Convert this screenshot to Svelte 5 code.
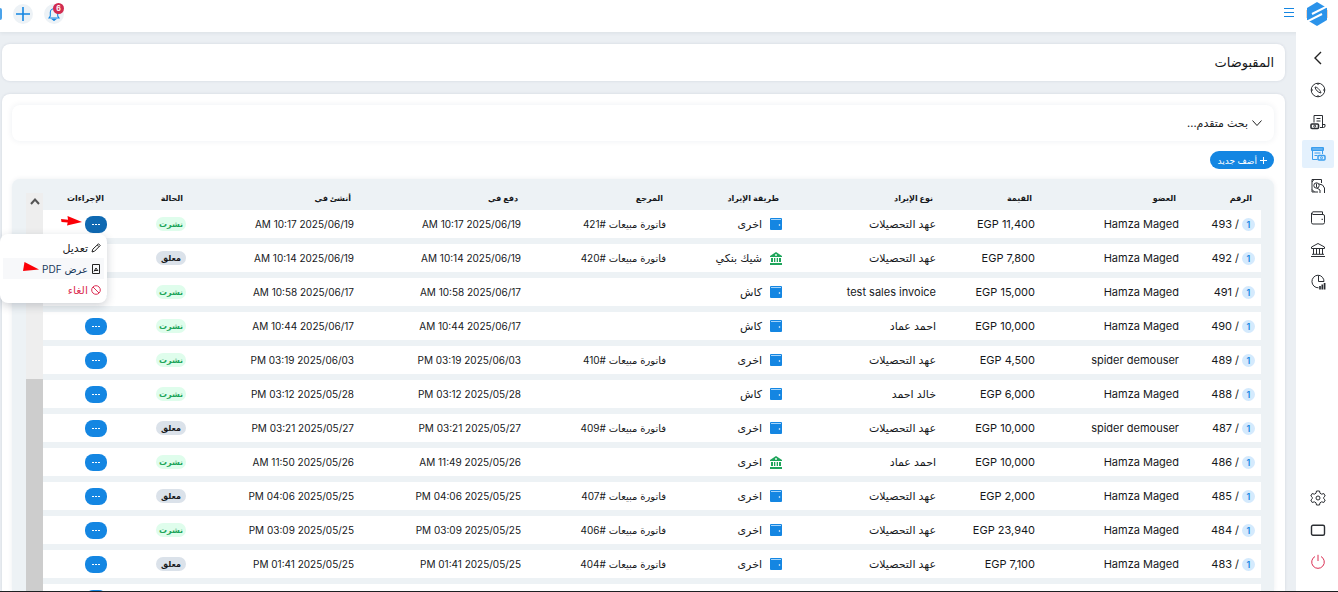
<script lang="ts">
  type Method = 'wallet' | 'bank';

  interface Receipt {
    id: string;
    member: string;
    amount: string;
    type: string;
    icon: Method;
    method: string;
    ref: string;
    paid: string;
    created: string;
    published: boolean;
  }

  const columns = [
    { label: 'الرقم', width: 76 },
    { label: 'العضو', width: 144 },
    { label: 'القيمة', width: 99 },
    { label: 'نوع الإيراد', width: 154 },
    { label: 'طريقة الإيراد', width: 116 },
    { label: 'المرجع', width: 145 },
    { label: 'دفع في', width: 167 },
    { label: 'أنشئ في', width: 168 },
    { label: 'الحالة', width: 79 },
    { label: 'الإجراءات', width: 70 },
  ];
  const total = columns.reduce((sum, c) => sum + c.width, 0);

  const deposits = 'عهد التحصيلات';
  const invoice = 'فاتورة مبيعات';

  function row(
    id: string, member: string, amount: string, type: string, icon: Method, method: string,
    ref: string, paid: string, created: string, published: boolean
  ): Receipt {
    return { id, member, amount, type, icon, method, ref, paid, created, published };
  }

  const receipts: Receipt[] = [
    row('493', 'Hamza Maged', '11,400', deposits, 'wallet', 'اخرى', '421', '2025/06/19 10:17 AM', '2025/06/19 10:17 AM', true),
    row('492', 'Hamza Maged', '7,800', deposits, 'bank', 'شيك بنكي', '420', '2025/06/19 10:14 AM', '2025/06/19 10:14 AM', false),
    row('491', 'Hamza Maged', '15,000', 'test sales invoice', 'wallet', 'كاش', '', '2025/06/17 10:58 AM', '2025/06/17 10:58 AM', true),
    row('490', 'Hamza Maged', '10,000', 'احمد عماد', 'wallet', 'كاش', '', '2025/06/17 10:44 AM', '2025/06/17 10:44 AM', true),
    row('489', 'spider demouser', '4,500', deposits, 'wallet', 'اخرى', '410', '2025/06/03 03:19 PM', '2025/06/03 03:19 PM', true),
    row('488', 'Hamza Maged', '6,000', 'خالد احمد', 'wallet', 'كاش', '', '2025/05/28 03:12 PM', '2025/05/28 03:12 PM', true),
    row('487', 'spider demouser', '10,000', deposits, 'wallet', 'اخرى', '409', '2025/05/27 03:21 PM', '2025/05/27 03:21 PM', false),
    row('486', 'Hamza Maged', '10,000', 'احمد عماد', 'bank', 'اخرى', '', '2025/05/26 11:49 AM', '2025/05/26 11:50 AM', true),
    row('485', 'Hamza Maged', '2,000', deposits, 'wallet', 'اخرى', '407', '2025/05/25 04:06 PM', '2025/05/25 04:06 PM', false),
    row('484', 'Hamza Maged', '23,940', deposits, 'wallet', 'اخرى', '406', '2025/05/25 03:09 PM', '2025/05/25 03:09 PM', true),
    row('483', 'Hamza Maged', '7,100', deposits, 'wallet', 'اخرى', '404', '2025/05/25 01:41 PM', '2025/05/25 01:41 PM', false),
  ];

  let openId = $state('493');

  function toggle(id: string) {
    openId = openId === id ? '' : id;
  }
</script>

<div class="shell" dir="rtl">
  <header class="topbar">
    <a class="logo" href="#home" aria-label="الرئيسية">
      <svg width="22" height="24" viewBox="0 0 22 24">
        <path d="M0 8h22v8H0z" fill="#f7d8c2" />
        <path d="M11 0 21 6v12l-10 6-10-6V6z" fill="#2b93ea" />
        <path d="M22 4 6 12M0 20l16-8" fill="none" stroke="#fff" stroke-width="2" />
      </svg>
    </a>
    <button class="burger" aria-label="القائمة">
      <svg width="12" height="10" viewBox="0 0 12 10" fill="#1486e2">
        <path d="M1 0h10v1H1zM1 4h10v1H1zM1 8h10v1H1z" />
      </svg>
    </button>
    <div class="tools">
      <button class="round bell" aria-label="الإشعارات">
        <svg width="12" height="14" viewBox="0 0 12 14" fill="none" stroke="#1486e2" stroke-width="1.1">
          <path d="M1 11h10L9.700 9V5.500a3.700 3.700 0 0 0-7.400 0V9zM6 .5v1.200" />
          <path d="M4.500 12.200h3L6 13.400z" fill="#1486e2" />
        </svg>
        <span class="count">6</span>
      </button>
      <button class="round" aria-label="إضافة">
        <svg width="14" height="14" viewBox="0 0 14 14" stroke="#1486e2" stroke-width="1.6"><path d="M7 0v14M0 7h14" /></svg>
      </button>
      <button class="avatar" aria-label="الحساب"></button>
    </div>
  </header>

  <div class="body">
    <nav class="side">
      <button class="collapse" aria-label="طي القائمة">
        <svg width="10" height="14" viewBox="0 0 10 14" fill="none" stroke="#222" stroke-width="1.4"><path d="M8 1 2 7l6 6" /></svg>
      </button>
      <a href="#compass" aria-label="لوحة التحكم">
        <svg viewBox="0 0 16 16"><circle cx="8" cy="8" r="6.800" /><path d="M5 5c2 0 5 2.500 6 6-3-.5-5.500-3-6-6zM8 1v2M8 13v2M1 8h2M13 8h2" /></svg>
      </a>
      <a href="#sales" aria-label="المبيعات">
        <svg viewBox="0 0 16 16"><path d="M4 8.500V1.500h8.500V13M6.500 4.500h4M6.500 7h4M10 13.500h3.500a1.500 1.500 0 0 0 1.500-1.500v-1.500h-2.500" /><rect x="1" y="10" width="7.500" height="4.500" rx="1" stroke-width="1.600" /><circle cx="4.700" cy="12.200" r="1" /></svg>
      </a>
      <a class="active" href="#receipts" aria-label="المقبوضات">
        <svg viewBox="0 0 16 16"><path d="M1.500 1.500h12v3h-12zM2.500 4.500v9h5M12.500 4.500V8M4.500 7h6M4.500 9.500h3" /><path d="M2 2h11v2H2z" fill="#8ac6f6" /><rect x="8" y="9.500" width="7" height="4.500" rx="1" stroke-width="1.500" /><circle cx="11.500" cy="11.800" r="1" /></svg>
      </a>
      <a href="#payments" aria-label="المدفوعات">
        <svg viewBox="0 0 16 16"><path d="M8 14H2V1.500h9.500V5M2 4l2-2.500M2 11.500 4.500 14" /><circle cx="6.500" cy="7.500" r="2.700" /><path d="M6.500 5.500v4M9 6l3.500 1 2 3v5M7 10l3 2v3" /></svg>
      </a>
      <a href="#wallet" aria-label="المحفظة">
        <svg viewBox="0 0 16 16"><path d="M1.500 3v9.500A1.500 1.500 0 0 0 3 14h10a1.500 1.500 0 0 0 1.500-1.500V6A1.500 1.500 0 0 0 13 4.500H3A1.400 1.400 0 0 1 3 1.800h9.500v2.700M11.500 9.300h1.500" /></svg>
      </a>
      <a href="#bank" aria-label="البنوك">
        <svg viewBox="0 0 16 16"><path d="M1.500 6.500V5L8 1.500 14.500 5v1.500zM3.500 7v5M6.500 7v5M9.500 7v5M12.500 7v5M2 12.300h12M1 14.500h14" /></svg>
      </a>
      <a href="#reports" aria-label="التقارير">
        <svg viewBox="0 0 16 16"><path d="M8 1.200a6.300 6.300 0 1 0 .5 12.600M8.500 1.200A6.300 6.300 0 0 1 14 7.500H8.500z" /><path d="M10 12v3.500M12.300 10.500v5M14.600 9v6.500" stroke-width="1.700" /></svg>
      </a>
      <span class="spacer"></span>
      <a href="#settings" aria-label="الإعدادات">
        <svg viewBox="0 0 16 16"><path d="m6.500 1-.5 2.200-1.700 1L2.200 3.500.8 6l1.600 1.500v1L.8 10l1.400 2.500 2.100-.7 1.700 1 .5 2.200h3l.5-2.200 1.700-1 2.100.7 1.400-2.500-1.600-1.500v-1L15.200 6l-1.400-2.500-2.100.7-1.700-1L9.500 1z" /><circle cx="8" cy="8" r="2" /></svg>
      </a>
      <a href="#screen" aria-label="الشاشة">
        <svg viewBox="0 0 16 16"><rect x="1.500" y="3.300" width="13" height="10" rx="1.500" stroke-width="1.400" /></svg>
      </a>
      <a class="power" href="#logout" aria-label="خروج">
        <svg viewBox="0 0 16 16"><path d="M5 2.500a6.300 6.300 0 1 0 6 0M8 .8V7" /></svg>
      </a>
    </nav>

    <main>
      <section class="card title"><h1>المقبوضات</h1></section>

      <section class="card content">
        <button class="search">
          <svg width="10" height="6" viewBox="0 0 10 6" fill="none" stroke="#222"><path d="m.5.5 4.500 5 4.500-5" /></svg>
          بحث متقدم...
        </button>
        <button class="add">
          <svg width="7" height="7" viewBox="0 0 7 7" fill="#fff"><path d="M3 0h1v3h3v1H4v3H3V4H0V3h3z" /></svg>
          أضف جديد
        </button>

        <div class="panel">
          <table>
            <colgroup>
              {#each columns as col}
                <col style="width: {(col.width / total) * 100}%" />
              {/each}
            </colgroup>
            <thead>
              <tr>
                {#each columns as col}
                  <th scope="col">{col.label}</th>
                {/each}
              </tr>
            </thead>
            <tbody>
              {#each receipts as r (r.id)}
                <tr>
                  <td><span class="num"><span class="branch">1</span><span>/</span><span>{r.id}</span></span></td>
                  <td>{r.member}</td>
                  <td>EGP {r.amount}</td>
                  <td>{r.type}</td>
                  <td>
                    <span class="method">
                      {#if r.icon === 'wallet'}
                        <svg width="12" height="12" viewBox="0 0 12 12">
                          <rect width="12" height="12" rx="1" fill="#1486e2" /><path d="M1 1h10v1H1z" fill="#a5d4fa" /><circle cx="9.500" cy="7" r=".8" fill="#fff" />
                        </svg>
                      {:else}
                        <svg width="12" height="13" viewBox="0 0 12 13" fill="#1ea55b">
                          <path d="M6 0 12 4v1H0V4zM1 6h2v4H1zM4 6h1.300v4H4zM6.700 6H8v4H6.700zM9 6h2v4H9zM0 11h12v2H0z" /><circle cx="6" cy="3" r=".9" fill="#fff" />
                        </svg>
                      {/if}
                      {r.method}
                    </span>
                  </td>
                  <td class="figures">{r.ref ? `${invoice} #${r.ref}` : ''}</td>
                  <td class="figures">{r.paid}</td>
                  <td class="figures">{r.created}</td>
                  <td><span class="status" class:published={r.published}>{r.published ? 'نشرت' : 'معلق'}</span></td>
                  <td class="actions">
                    <button class="more" class:open={openId === r.id} aria-label="الإجراءات" aria-expanded={openId === r.id} onclick={() => toggle(r.id)}>
                      <svg width="8" height="1" viewBox="0 0 8 1" fill="#fff"><path d="M0 0h2v1H0zM3 0h2v1H3zM6 0h2v1H6z" /></svg>
                    </button>
                    {#if openId === r.id}
                      <svg class="arrow first" width="21" height="10" viewBox="0 0 21 10" fill="#fb0007"><path d="M0 3l7 .7L6.500 0 21 6 6 9.500l.7-3L.5 6z" /></svg>
                      <div class="menu" role="menu">
                        <button role="menuitem">
                          <svg viewBox="0 0 10 10"><path d="m1 9 .8-2.800L7.500.8l1.700 1.700-5.600 5.700zM6.300 2l1.600 1.600" /></svg>
                          تعديل
                        </button>
                        <button class="hover" role="menuitem">
                          <svg viewBox="0 0 10 10"><path d="M1.500.5h7v9h-7zM3 7.500l2-3.500 2 3M3 6.500h4" /></svg>
                          عرض PDF
                          <svg class="arrow second" viewBox="0 0 16 10"><path d="M1.500 0 16 7.500 0 9z" fill="#fb0007" stroke="none" /></svg>
                        </button>
                        <button class="danger" role="menuitem">
                          <svg viewBox="0 0 10 10"><circle cx="5" cy="5" r="4.300" /><path d="m2 2 6 6" /></svg>
                          الغاء
                        </button>
                      </div>
                    {/if}
                  </td>
                </tr>
              {/each}
              <tr>
                <td colspan="9"></td>
                <td class="actions">
                  <button class="more" aria-label="الإجراءات"></button>
                </td>
              </tr>
            </tbody>
          </table>
          <div class="scroll" aria-hidden="true">
            <svg width="10" height="7" viewBox="0 0 10 7" fill="none" stroke="#555" stroke-width="2"><path d="m1 6 4-4.500L9 6" /></svg>
            <span class="thumb"></span>
          </div>
        </div>
      </section>
    </main>
  </div>
  <div class="edge"></div>
</div>

<style>
  :global(body) {
    margin: 0;
  }
  .shell {
    display: flex;
    flex-direction: column;
    height: 100vh;
    overflow: hidden;
    background: #ebeff3;
    color: #16181b;
    font-family: Inter, 'DejaVu Sans', sans-serif;
    font-size: 11px;
  }
  button {
    padding: 0;
    border: 0;
    background: none;
    color: inherit;
    font: inherit;
    cursor: pointer;
  }
  svg {
    flex: none;
    display: block;
  }
  .topbar {
    display: flex;
    align-items: center;
    flex: none;
    height: 32px;
    padding-right: 10px;
    background: #fff;
    box-shadow: 0 1px 4px rgba(30, 50, 70, 0.08);
  }
  .logo {
    margin-bottom: 4px;
  }
  .burger {
    margin: 0 11px 6px 0;
  }
  .tools {
    display: flex;
    align-items: center;
    gap: 11px;
    margin-right: auto;
    margin-bottom: 4px;
  }
  .round {
    position: relative;
    display: grid;
    place-items: center;
    width: 20px;
    height: 20px;
    border-radius: 50%;
    background: #edf2f6;
  }
  .count {
    position: absolute;
    top: -1px;
    left: 9px;
    width: 11px;
    height: 11px;
    border-radius: 50%;
    background: #d12b50;
    color: #fff;
    font-size: 7px;
    font-weight: 700;
    line-height: 11px;
  }
  .avatar {
    width: 2px;
    height: 12px;
    border-radius: 0 6px 6px 0;
    background: #4ba3ea;
  }
  .body {
    display: flex;
    flex: 1;
    min-height: 0;
    overflow: hidden;
  }
  .side {
    display: flex;
    flex-direction: column;
    align-items: center;
    flex: none;
    gap: 4px;
    width: 42px;
    padding: 12px 0 15px 2px;
    box-sizing: border-box;
    background: #fff;
  }
  .side a,
  .collapse {
    display: grid;
    place-items: center;
    flex: none;
    width: 32px;
    height: 28px;
    border-radius: 2px;
  }
  .side a svg {
    width: 16px;
    height: 16px;
    fill: none;
    stroke: #2b2e33;
    stroke-width: 1;
  }
  .side a.active {
    background: #e4f1fd;
  }
  .side a.active svg {
    stroke: #3a9eee;
  }
  .side a.power svg {
    stroke: #dc3055;
  }
  .spacer {
    flex: 1;
  }
  main {
    display: flex;
    flex-direction: column;
    flex: 1;
    gap: 13px;
    min-width: 0;
    padding: 12px 11px 0 2px;
  }
  .card {
    border-radius: 8px;
    background: #fff;
    box-shadow: 0 0 3px rgba(30, 50, 90, 0.12);
  }
  .title {
    flex: none;
    padding: 0 11px;
  }
  h1 {
    margin: 0;
    font-size: 13px;
    font-weight: 400;
    line-height: 37px;
  }
  .content {
    display: flex;
    flex-direction: column;
    align-items: flex-start;
    flex: 1;
    min-height: 0;
    padding: 11px 11px 0 10px;
    border-radius: 8px 8px 0 0;
  }
  .search {
    display: flex;
    align-items: center;
    gap: 4px;
    flex: none;
    width: 100%;
    height: 36px;
    padding: 0 12px;
    border-radius: 8px;
    box-shadow: 0 0 6px rgba(30, 50, 90, 0.08);
  }
  .add {
    display: flex;
    align-items: center;
    justify-content: center;
    gap: 3px;
    flex: none;
    height: 18px;
    margin: 10px 0;
    padding: 0 7px;
    border-radius: 9px;
    background: #1486e2;
    color: #fff;
    font-size: 9px;
  }
  .panel {
    display: flex;
    flex: 1;
    width: 100%;
    min-height: 0;
    padding: 14px 13px 0 14px;
    box-sizing: border-box;
    border-radius: 8px 8px 0 0;
    background: #edf2f5;
    box-shadow: 0 0 5px rgba(30, 50, 90, 0.08);
  }
  table {
    flex: 1;
    align-self: flex-start;
    min-width: 0;
    border-collapse: collapse;
    table-layout: fixed;
  }
  th {
    height: 17px;
    padding: 0 9px 7px 0;
    box-sizing: border-box;
    font-size: 8px;
    font-weight: 700;
    line-height: 10px;
    text-align: right;
    white-space: nowrap;
  }
  td {
    height: 34px;
    padding: 0 6px 6px 0;
    box-sizing: border-box;
    background: linear-gradient(#fff 28px, #edf2f5 28px);
    line-height: 16px;
    white-space: nowrap;
  }
  .figures {
    font-size: 10px;
  }
  .num,
  .method {
    display: flex;
    align-items: center;
  }
  .num {
    gap: 3px;
  }
  .method {
    gap: 8px;
  }
  .branch {
    width: 13px;
    height: 13px;
    border-radius: 50%;
    background: #d4eafd;
    color: #1486e2;
    font-size: 9px;
    font-weight: 600;
    line-height: 13px;
    text-align: center;
  }
  .status {
    display: block;
    width: 30px;
    height: 14px;
    border-radius: 7px;
    background: #dbe2ea;
    font-size: 8px;
    font-weight: 700;
    line-height: 14px;
    text-align: center;
  }
  .status.published {
    background: #dffdec;
    color: #1ea55b;
  }
  .actions {
    position: relative;
  }
  .more {
    display: grid;
    place-items: center;
    width: 22px;
    height: 17px;
    border-radius: 8px;
    background: #1486e2;
  }
  .more.open {
    background: #0f69b2;
  }
  .arrow {
    position: absolute;
  }
  .arrow.first {
    top: 6px;
    left: 18px;
  }
  .menu {
    position: absolute;
    top: 24px;
    right: 6px;
    z-index: 2;
    width: 107px;
    padding: 3px;
    box-sizing: border-box;
    border-radius: 8px;
    background: #fff;
    box-shadow: 0 3px 10px rgba(20, 30, 50, 0.2);
  }
  .menu button {
    position: relative;
    display: flex;
    align-items: center;
    gap: 3px;
    width: 100%;
    height: 21px;
    padding: 0 3px;
  }
  .menu svg {
    width: 10px;
    height: 10px;
    fill: none;
    stroke: #222;
    stroke-width: 1;
  }
  .menu .hover {
    background: #f7f8fa;
    color: #1a3a5c;
    font-size: 10px;
  }
  .menu .danger,
  .menu .danger svg {
    color: #dc3055;
    stroke: #dc3055;
  }
  .menu .arrow.second {
    top: 4px;
    left: 20px;
    width: 16px;
  }
  .scroll {
    display: flex;
    flex-direction: column;
    align-items: center;
    flex: none;
    width: 17px;
    padding-top: 5px;
    box-sizing: border-box;
    background: #eee;
  }
  .thumb {
    width: 100%;
    height: 54%;
    margin-top: auto;
    background: #cdcdcd;
  }
  .edge {
    flex: none;
    height: 1px;
    background: #1d1f22;
  }
</style>
